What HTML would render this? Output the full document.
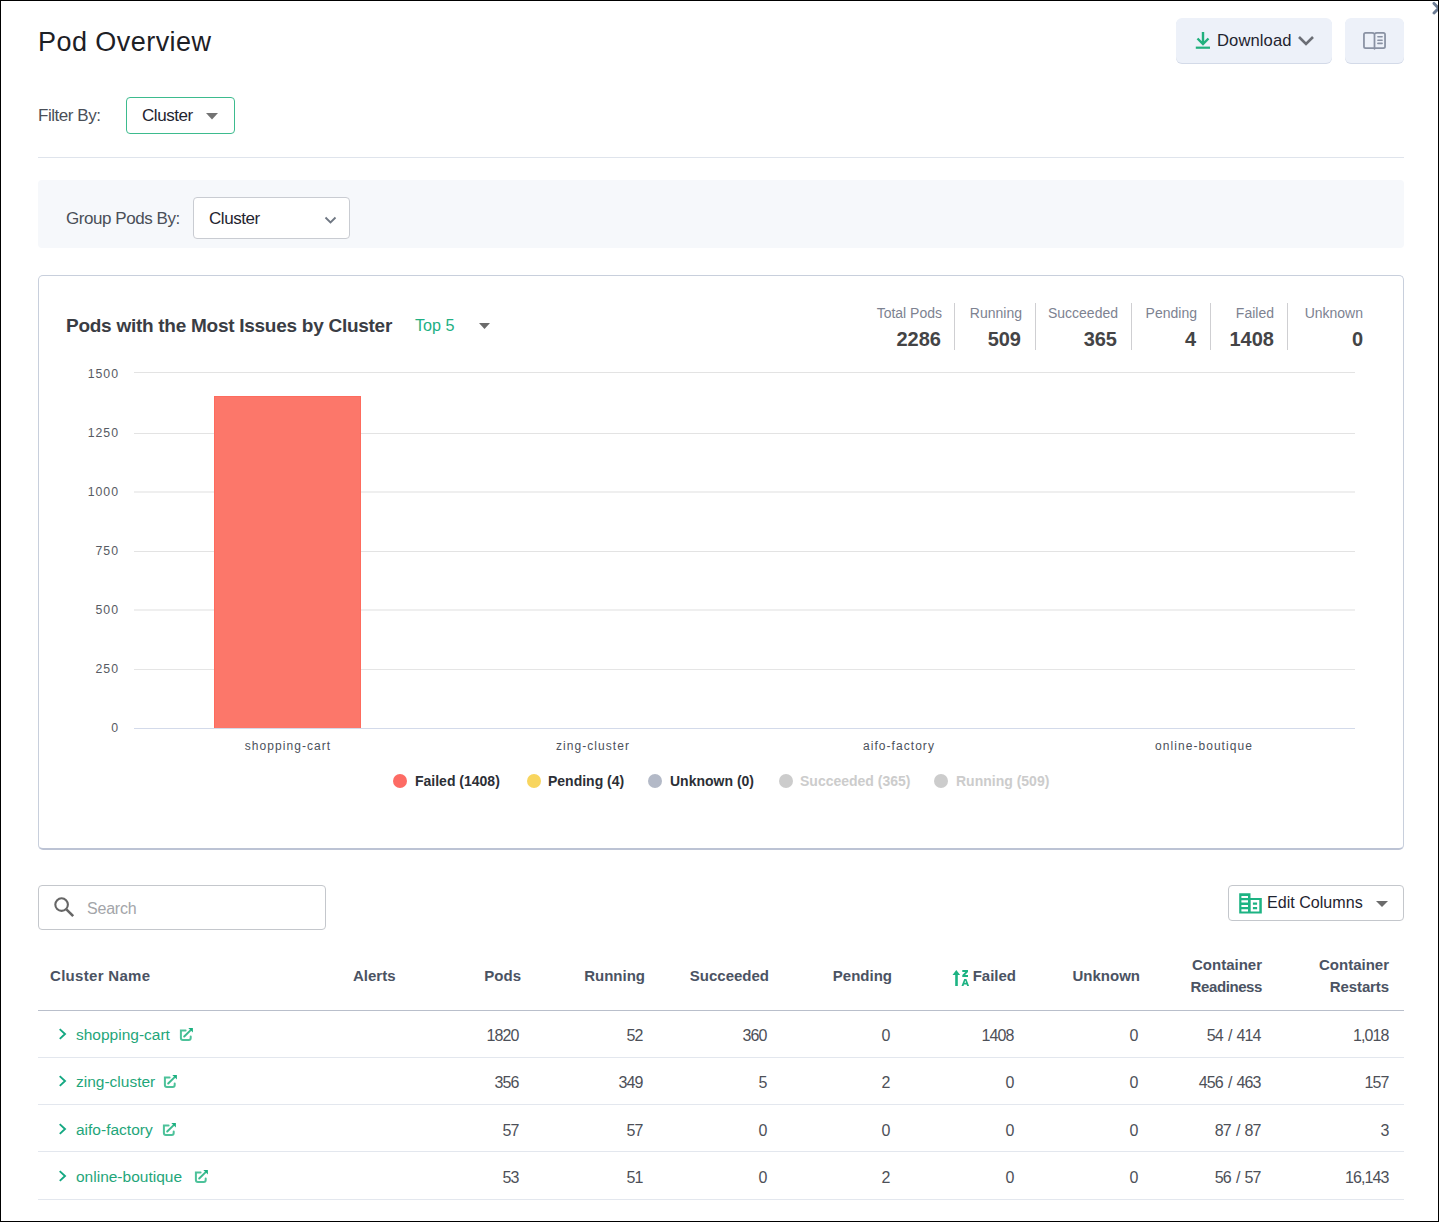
<!DOCTYPE html>
<html><head><meta charset="utf-8">
<style>
*{box-sizing:border-box;margin:0;padding:0}
html,body{width:1439px;height:1222px;overflow:hidden;background:#fff}
body{font-family:"Liberation Sans",sans-serif;position:relative}
.a{position:absolute;white-space:nowrap}
.frame{position:absolute;left:0;top:0;width:1439px;height:1222px;border:1px solid #000;pointer-events:none;z-index:10}
.title{left:38px;top:27px;font-size:27px;line-height:30px;color:#1d2025;letter-spacing:0.45px}
.btn{position:absolute;background:#edf1f9;border-radius:6px;box-shadow:0 1px 0 #d3dae8}
.lbl{font-size:17px;line-height:20px;color:#4a4f58;letter-spacing:-0.45px}
.divider{position:absolute;left:38px;top:157px;width:1366px;height:1px;background:#dfe4ec}
.group{position:absolute;left:38px;top:180px;width:1366px;height:68px;background:#f6f8fb;border-radius:4px}
.card{position:absolute;left:38px;top:275px;width:1366px;height:575px;border:1px solid #c8cfdc;border-bottom:2px solid #bcc3d4;border-radius:5px}
.stl{font-size:14px;line-height:16px;color:#7d8291;text-align:right}
.stv{font-size:20px;line-height:22px;font-weight:bold;color:#444446;text-align:right}
.sep{position:absolute;width:1px;background:#cfcfd2;top:303px;height:47px}
.ylab{font-size:12.3px;line-height:14px;color:#575b63;text-align:right;letter-spacing:1px}
.grid{position:absolute;left:134px;width:1221px;height:1px;background:#e6e6e6}
.xlab{font-size:12px;line-height:14px;color:#4c515b;letter-spacing:1.05px;text-align:center;width:300px}
.leg{font-size:14px;line-height:16px;font-weight:bold;color:#2c2f36}
.dot{position:absolute;width:14px;height:14px;border-radius:50%}
.th{font-size:15px;line-height:22px;font-weight:bold;color:#4b5363;letter-spacing:0px}
.td{font-size:16px;line-height:18px;color:#4d5058;text-align:right;letter-spacing:-0.9px;word-spacing:1.5px}
.link{font-size:15.5px;line-height:18px;color:#1fa67a}
.rowline{position:absolute;left:38px;width:1366px;height:1px;background:#e3e7ee}
</style></head><body>
<div class="frame"></div>
<svg class="a" style="left:1428px;top:0px;z-index:5" width="11" height="17" viewBox="0 0 11 17"><path d="M6 3.4 L10.6 8.2 L6 13" stroke="#6b7b92" stroke-width="2.9" fill="none" stroke-linecap="round"/></svg>
<div class="a title">Pod Overview</div>
<div class="btn" style="left:1176px;top:18px;width:156px;height:45px"></div>
<div class="a lbl" style="left:1217px;top:31px;font-size:16.6px;color:#1f2430;letter-spacing:0.1px">Download</div>
<svg class="a" style="left:1194px;top:30px" width="18" height="20" viewBox="0 0 18 20"><path d="M9 2 V14 M3.5 8.5 L9 14 L14.5 8.5" stroke="#21b07d" stroke-width="2.4" fill="none"/><rect x="1.8" y="16.6" width="14.2" height="2.2" fill="#21b07d"/></svg>
<svg class="a" style="left:1297px;top:35px" width="18" height="11" viewBox="0 0 18 11"><path d="M2 2 L9 9 L16 2" stroke="#6b6e75" stroke-width="2.6" fill="none"/></svg>
<div class="btn" style="left:1345px;top:18px;width:59px;height:45px"></div>
<svg class="a" style="left:1362px;top:31px" width="25" height="20" viewBox="0 0 25 20"><path d="M12.5 3 Q11.6 1.85 10 1.85 H3.6 Q1.95 1.85 1.95 3.5 V15.4 Q1.95 17.05 3.6 17.05 H21.4 Q23.05 17.05 23.05 15.4 V3.5 Q23.05 1.85 21.4 1.85 H15 Q13.4 1.85 12.5 3 Z M12.5 3 V17.8" stroke="#8991a3" stroke-width="1.75" fill="none" stroke-linecap="round"/><path d="M15.9 5.8 H20.1 M15.9 9.2 H20.1 M15.9 12.4 H20.1" stroke="#8991a3" stroke-width="1.6" stroke-linecap="round"/></svg>
<div class="a lbl" style="left:38px;top:106px">Filter By:</div>
<div style="position:absolute;left:126px;top:97px;width:109px;height:37px;border:1px solid #3dbb8e;border-radius:4px"></div>
<div class="a lbl" style="left:142px;top:106px;color:#1f2430">Cluster</div>
<svg class="a" style="left:206px;top:113px" width="12" height="7" viewBox="0 0 12 7"><path d="M0 0 H12 L6 6.5 Z" fill="#737373"/></svg>
<div class="divider"></div>
<div class="group"></div>
<div class="a lbl" style="left:66px;top:209px">Group Pods By:</div>
<div style="position:absolute;left:193px;top:197px;width:157px;height:42px;background:#fff;border:1px solid #c9ccd2;border-radius:4px"></div>
<div class="a lbl" style="left:209px;top:209px;color:#1f2430">Cluster</div>
<svg class="a" style="left:324px;top:216px" width="13" height="9" viewBox="0 0 13 9"><path d="M1.5 1.5 L6.5 6.5 L11.5 1.5" stroke="#6f7783" stroke-width="1.8" fill="none"/></svg>
<div class="card"></div>
<div class="a" style="left:66px;top:315px;font-size:19px;line-height:22px;font-weight:bold;color:#3a3d44;letter-spacing:-0.27px">Pods with the Most Issues by Cluster</div>
<div class="a" style="left:415px;top:315px;font-size:16.2px;line-height:20px;color:#22b083">Top 5</div>
<svg class="a" style="left:479px;top:323px" width="11" height="6" viewBox="0 0 11 6"><path d="M0 0 H11 L5.5 6 Z" fill="#6b6b6b"/></svg>
<div class="a stl" style="right:497px;top:305px">Total Pods</div>
<div class="a stv" style="right:498px;top:328px">2286</div>
<div class="a stl" style="right:417px;top:305px">Running</div>
<div class="a stv" style="right:418px;top:328px">509</div>
<div class="a stl" style="right:321px;top:305px">Succeeded</div>
<div class="a stv" style="right:322px;top:328px">365</div>
<div class="a stl" style="right:242px;top:305px">Pending</div>
<div class="a stv" style="right:243px;top:328px">4</div>
<div class="a stl" style="right:165px;top:305px">Failed</div>
<div class="a stv" style="right:165px;top:328px">1408</div>
<div class="a stl" style="right:76px;top:305px">Unknown</div>
<div class="a stv" style="right:76px;top:328px">0</div>
<div class="sep" style="left:954px"></div>
<div class="sep" style="left:1035px"></div>
<div class="sep" style="left:1131px"></div>
<div class="sep" style="left:1210px"></div>
<div class="sep" style="left:1287px"></div>
<div class="grid" style="top:372px;height:1px;background:#e3e3e3"></div>
<div class="grid" style="top:433px;height:1px;background:#e3e3e3"></div>
<div class="grid" style="top:491px;height:2px;background:#efefef"></div>
<div class="grid" style="top:551px;height:1px;background:#e3e3e3"></div>
<div class="grid" style="top:609px;height:2px;background:#efefef"></div>
<div class="grid" style="top:669px;height:1px;background:#e5e5e5"></div>
<div class="grid" style="top:728px;background:#d3daea"></div>
<div class="a ylab" style="right:1320px;top:367px">1500</div>
<div class="a ylab" style="right:1320px;top:426px">1250</div>
<div class="a ylab" style="right:1320px;top:485px">1000</div>
<div class="a ylab" style="right:1320px;top:544px">750</div>
<div class="a ylab" style="right:1320px;top:603px">500</div>
<div class="a ylab" style="right:1320px;top:662px">250</div>
<div class="a ylab" style="right:1320px;top:721px">0</div>
<div style="position:absolute;left:214px;top:396px;width:147px;height:332px;background:#fc776a;border:1px solid rgba(255,100,85,0.6);border-bottom:none"></div>
<div class="a xlab" style="left:138px;top:739px">shopping-cart</div>
<div class="a xlab" style="left:443px;top:739px">zing-cluster</div>
<div class="a xlab" style="left:749px;top:739px">aifo-factory</div>
<div class="a xlab" style="left:1054px;top:739px">online-boutique</div>
<div class="dot" style="left:393px;top:774px;background:#fd6b64"></div>
<div class="a leg" style="left:415px;top:773px">Failed (1408)</div>
<div class="dot" style="left:527px;top:774px;background:#f8d55e"></div>
<div class="a leg" style="left:548px;top:773px">Pending (4)</div>
<div class="dot" style="left:648px;top:774px;background:#b3b9c7"></div>
<div class="a leg" style="left:670px;top:773px">Unknown (0)</div>
<div class="dot" style="left:779px;top:774px;background:#cccccc"></div>
<div class="a leg" style="left:800px;top:773px;color:#cccccc">Succeeded (365)</div>
<div class="dot" style="left:934px;top:774px;background:#cccccc"></div>
<div class="a leg" style="left:956px;top:773px;color:#cccccc">Running (509)</div>
<div style="position:absolute;left:38px;top:885px;width:288px;height:45px;border:1px solid #c4c7cc;border-radius:4px"></div>
<svg class="a" style="left:50px;top:893px" width="28" height="28" viewBox="0 0 28 28"><circle cx="11.6" cy="11.6" r="6.3" stroke="#666" stroke-width="2.1" fill="none"/><path d="M16.4 16.4 L23.2 23.2" stroke="#666" stroke-width="2.6"/></svg>
<div class="a" style="left:87px;top:899px;font-size:16px;line-height:20px;color:#a3a5a9;letter-spacing:-0.2px">Search</div>
<div style="position:absolute;left:1228px;top:885px;width:176px;height:36px;border:1px solid #c4c7cc;border-radius:4px"></div>
<svg class="a" style="left:1239px;top:893px" width="24" height="22" viewBox="0 0 24 22"><path fill="#1db383" fill-rule="evenodd" d="M0.2 0.2 H11.5 V4.95 H22.8 V20.6 H0.2 Z M2.4 3 H9 V5 H2.4 Z M2.4 7.3 H9 V9.5 H2.4 Z M2.4 12 H9 V14 H2.4 Z M2.4 16.2 H9 V18.4 H2.4 Z M11.7 6.9 H20.3 V18.4 H11.7 Z"/><path fill="#1db383" d="M13.9 9.4 H18.1 V11.7 H13.9 Z M13.9 14 H18.1 V16.2 H13.9 Z"/></svg>
<div class="a" style="left:1267px;top:892px;font-size:16.1px;line-height:20px;color:#1f2430">Edit Columns</div>
<svg class="a" style="left:1376px;top:901px" width="12" height="6" viewBox="0 0 12 6"><path d="M0 0 H12 L6 6 Z" fill="#6b6b6b"/></svg>
<div class="a th" style="left:50px;top:965px;letter-spacing:0.3px">Cluster Name</div>
<div class="a th" style="left:353px;top:965px">Alerts</div>
<div class="a th" style="right:918.0px;top:965px">Pods</div>
<div class="a th" style="right:794.0px;top:965px">Running</div>
<div class="a th" style="right:670.0px;top:965px">Succeeded</div>
<div class="a th" style="right:547.0px;top:965px">Pending</div>
<div class="a th" style="right:423.0px;top:965px">Failed</div>
<div class="a th" style="right:299.0px;top:965px">Unknown</div>
<div class="a th" style="right:177px;top:954px;text-align:right;line-height:21.7px">Container<br><span style="letter-spacing:-0.4px">Readiness</span></div>
<div class="a th" style="right:50px;top:954px;text-align:right;line-height:21.7px">Container<br><span style="letter-spacing:-0.1px">Restarts</span></div>
<svg class="a" style="left:948px;top:965px" width="24" height="24" viewBox="0 0 24 24"><path fill="#1db383" d="M4.5 9.9 L8.3 4.9 L12.1 9.9 H9.8 V20.9 H7.2 V9.9 Z M14.3 5.1 H20 V6.9 L17 10.1 H20 V11.9 H14.3 V10.1 L17.3 6.9 H14.3 Z"/><path fill="#1db383" fill-rule="evenodd" d="M13.5 20.9 L16.2 13.9 H18.4 L21.1 20.9 H19.1 L18.6 19.4 H16 L15.5 20.9 Z M16.5 17.8 H18.1 L17.3 15.4 Z"/></svg>
<div class="rowline" style="top:1010px;background:#b9bfcb"></div>
<div class="rowline" style="top:1057px"></div>
<div class="rowline" style="top:1104px"></div>
<div class="rowline" style="top:1151px"></div>
<div class="rowline" style="top:1199px"></div>
<svg class="a" style="left:56px;top:1027px" width="12" height="14" viewBox="0 0 12 14"><path d="M3.7 2.1 L9 7 L3.8 11.9" stroke="#14a882" stroke-width="1.9" fill="none"/></svg>
<div class="a link" style="left:76px;top:1026px">shopping-cart</div>
<div class="a td" style="right:920.5px;top:1027px">1820</div>
<div class="a td" style="right:796.5px;top:1027px">52</div>
<div class="a td" style="right:672.5px;top:1027px">360</div>
<div class="a td" style="right:549.5px;top:1027px">0</div>
<div class="a td" style="right:425.5px;top:1027px">1408</div>
<div class="a td" style="right:301.5px;top:1027px">0</div>
<div class="a td" style="right:178.5px;top:1027px">54 / 414</div>
<div class="a td" style="right:50.5px;top:1027px">1,018</div>
<svg class="a" style="left:174px;top:1027px" width="21" height="16" viewBox="0 0 21 16"><path d="M11.6 3.45 H6.9 V11 Q6.9 12.9 8.9 12.9 H14.7 Q16.7 12.9 16.7 11 V9.5" stroke="#4dc29a" stroke-width="2" fill="none" stroke-linecap="round"/><path d="M10.2 9.5 L16.2 3.6" stroke="#3dbb90" stroke-width="2" stroke-linecap="round"/><path d="M14.3 1.1 H18.9 V5.6 Z" fill="#1ab07f"/></svg>
<svg class="a" style="left:56px;top:1074px" width="12" height="14" viewBox="0 0 12 14"><path d="M3.7 2.1 L9 7 L3.8 11.9" stroke="#14a882" stroke-width="1.9" fill="none"/></svg>
<div class="a link" style="left:76px;top:1073px">zing-cluster</div>
<div class="a td" style="right:920.5px;top:1074px">356</div>
<div class="a td" style="right:796.5px;top:1074px">349</div>
<div class="a td" style="right:672.5px;top:1074px">5</div>
<div class="a td" style="right:549.5px;top:1074px">2</div>
<div class="a td" style="right:425.5px;top:1074px">0</div>
<div class="a td" style="right:301.5px;top:1074px">0</div>
<div class="a td" style="right:178.5px;top:1074px">456 / 463</div>
<div class="a td" style="right:50.5px;top:1074px">157</div>
<svg class="a" style="left:158px;top:1074px" width="21" height="16" viewBox="0 0 21 16"><path d="M11.6 3.45 H6.9 V11 Q6.9 12.9 8.9 12.9 H14.7 Q16.7 12.9 16.7 11 V9.5" stroke="#4dc29a" stroke-width="2" fill="none" stroke-linecap="round"/><path d="M10.2 9.5 L16.2 3.6" stroke="#3dbb90" stroke-width="2" stroke-linecap="round"/><path d="M14.3 1.1 H18.9 V5.6 Z" fill="#1ab07f"/></svg>
<svg class="a" style="left:56px;top:1122px" width="12" height="14" viewBox="0 0 12 14"><path d="M3.7 2.1 L9 7 L3.8 11.9" stroke="#14a882" stroke-width="1.9" fill="none"/></svg>
<div class="a link" style="left:76px;top:1121px">aifo-factory</div>
<div class="a td" style="right:920.5px;top:1122px">57</div>
<div class="a td" style="right:796.5px;top:1122px">57</div>
<div class="a td" style="right:672.5px;top:1122px">0</div>
<div class="a td" style="right:549.5px;top:1122px">0</div>
<div class="a td" style="right:425.5px;top:1122px">0</div>
<div class="a td" style="right:301.5px;top:1122px">0</div>
<div class="a td" style="right:178.5px;top:1122px">87 / 87</div>
<div class="a td" style="right:50.5px;top:1122px">3</div>
<svg class="a" style="left:157px;top:1122px" width="21" height="16" viewBox="0 0 21 16"><path d="M11.6 3.45 H6.9 V11 Q6.9 12.9 8.9 12.9 H14.7 Q16.7 12.9 16.7 11 V9.5" stroke="#4dc29a" stroke-width="2" fill="none" stroke-linecap="round"/><path d="M10.2 9.5 L16.2 3.6" stroke="#3dbb90" stroke-width="2" stroke-linecap="round"/><path d="M14.3 1.1 H18.9 V5.6 Z" fill="#1ab07f"/></svg>
<svg class="a" style="left:56px;top:1169px" width="12" height="14" viewBox="0 0 12 14"><path d="M3.7 2.1 L9 7 L3.8 11.9" stroke="#14a882" stroke-width="1.9" fill="none"/></svg>
<div class="a link" style="left:76px;top:1168px">online-boutique</div>
<div class="a td" style="right:920.5px;top:1169px">53</div>
<div class="a td" style="right:796.5px;top:1169px">51</div>
<div class="a td" style="right:672.5px;top:1169px">0</div>
<div class="a td" style="right:549.5px;top:1169px">2</div>
<div class="a td" style="right:425.5px;top:1169px">0</div>
<div class="a td" style="right:301.5px;top:1169px">0</div>
<div class="a td" style="right:178.5px;top:1169px">56 / 57</div>
<div class="a td" style="right:50.5px;top:1169px">16,143</div>
<svg class="a" style="left:189px;top:1169px" width="21" height="16" viewBox="0 0 21 16"><path d="M11.6 3.45 H6.9 V11 Q6.9 12.9 8.9 12.9 H14.7 Q16.7 12.9 16.7 11 V9.5" stroke="#4dc29a" stroke-width="2" fill="none" stroke-linecap="round"/><path d="M10.2 9.5 L16.2 3.6" stroke="#3dbb90" stroke-width="2" stroke-linecap="round"/><path d="M14.3 1.1 H18.9 V5.6 Z" fill="#1ab07f"/></svg>
</body></html>
